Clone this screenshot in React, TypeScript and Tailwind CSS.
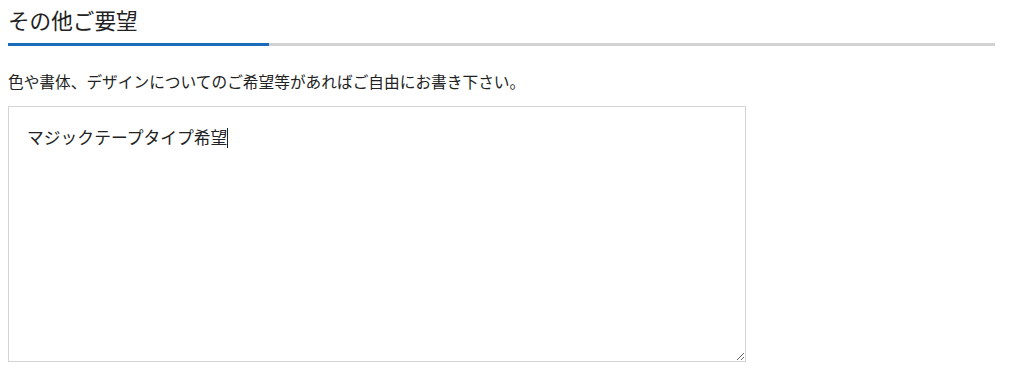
const fontStack = '"Noto Sans CJK JP", "Noto Sans", sans-serif';

export default function App() {
  const value = "マジックテープタイプ希望";

  return (
    <div
      className="bg-white min-h-[382px] px-2 text-[#222]"
      style={{ fontFamily: fontStack }}
    >
      <div className="w-[987px]">
        <h2 className="h-[43px] pt-[4px] text-[21.6px] leading-[32px] font-normal">
          その他ご要望
        </h2>
        <div className="flex h-[3px]">
          <div className="w-[261px] bg-[#1b6bbb]" />
          <div className="flex-1 bg-[#d2d2d2]" />
        </div>
      </div>

      <p className="mt-[24px] text-[15.7px] leading-[24px]">
        色や書体、デザインについてのご希望等があればご自由にお書き下さい。
      </p>

      <div className="relative mt-[12px] w-[738px] h-[256px]">
        <textarea
          readOnly
          defaultValue={value}
          className="block w-full h-full border border-[#d4d4d4] bg-white p-[18px] text-[16.8px] leading-[24px] text-[#222] outline-none"
          style={{ fontFamily: fontStack }}
        />
        {/* caret drawn over the textarea, placed by mirroring its text */}
        <div className="pointer-events-none absolute inset-0 border border-transparent p-[18px] text-[16.8px] leading-[24px]">
          <span className="text-transparent">{value}</span>
          <span className="inline-block w-px h-[20px] align-[-4px] bg-[#222]" />
        </div>
      </div>
    </div>
  );
}
